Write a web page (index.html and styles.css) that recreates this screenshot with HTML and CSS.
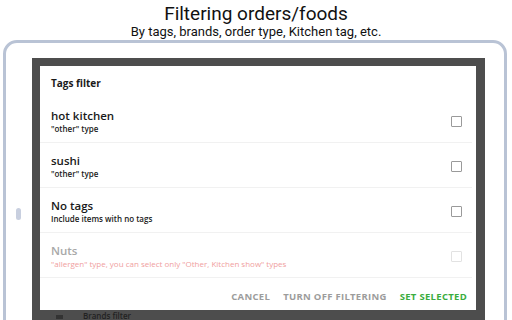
FILE: index.html
```html
<!DOCTYPE html>
<html>
<head>
<meta charset="utf-8">
<link rel="stylesheet" href="styles.css">
</head>
<body>
<div class="page">
  <header class="intro">
    <h1 class="title">Filtering orders/foods</h1>
    <p class="subtitle">By tags, brands, order type, Kitchen tag, etc.</p>
  </header>
  <div class="tablet">
    <div class="bezel"><span class="home"></span></div>
    <div class="screen">
      <div class="dialog">
        <div class="dialog-head">Tags filter</div>
        <div class="row">
          <div class="row-text">
            <div class="row-title">hot kitchen</div>
            <div class="row-sub">"other" type</div>
          </div>
          <span class="check"></span>
        </div>
        <div class="row">
          <div class="row-text">
            <div class="row-title">sushi</div>
            <div class="row-sub">"other" type</div>
          </div>
          <span class="check"></span>
        </div>
        <div class="row">
          <div class="row-text">
            <div class="row-title">No tags</div>
            <div class="row-sub">Include items with no tags</div>
          </div>
          <span class="check"></span>
        </div>
        <div class="row row-disabled">
          <div class="row-text">
            <div class="row-title">Nuts</div>
            <div class="row-sub">"allergen" type, you can select only "Other, Kitchen show" types</div>
          </div>
          <span class="check"></span>
        </div>
        <div class="actions">
          <span class="btn">CANCEL</span>
          <span class="btn">TURN OFF FILTERING</span>
          <span class="btn btn-primary">SET SELECTED</span>
        </div>
      </div>
      <div class="under">
        <span class="under-icon"></span>
        <span class="under-text">Brands filter</span>
      </div>
    </div>
  </div>
</div>
</body>
</html>
```
FILE: styles.css
```css
html, body {
  margin: 0;
  padding: 0;
  background: #ffffff;
}
.page {
  width: 512px;
  height: 320px;
  overflow: hidden;
  font-family: "Open Sans", "Liberation Sans", sans-serif;
}
.intro {
  height: 40px;
  text-align: center;
  font-family: Roboto, "Liberation Sans", sans-serif;
  color: #111;
}
.title {
  margin: 0;
  padding-top: 3px;
  font-size: 19px;
  font-weight: 400;
  line-height: 21px;
}
.subtitle {
  margin: 0;
  font-size: 13px;
  line-height: 15px;
}
.tablet {
  margin-left: 3px;
  width: 498px;
  height: 320px;
  border: 3px solid #b9c3d5;
  border-radius: 14px;
  padding-top: 15px;
  display: flex;
  align-items: flex-start;
}
.bezel {
  width: 26px;
  flex: none;
}
.home {
  display: block;
  margin-left: 10px;
  margin-top: 150px;
  width: 5px;
  height: 12px;
  border-radius: 3px;
  background: #c8cfdf;
}
.screen {
  width: 437px;
  height: 300px;
  background: #4d4d4d;
  padding: 8px 8px 0 8px;
}
.dialog {
  width: 436px;
  height: 244px;
  background: #ffffff;
  display: flex;
  flex-direction: column;
}
.dialog-head {
  height: 32px;
  box-sizing: border-box;
  padding: 10px 0 0 11px;
  font-size: 10px;
  font-weight: 700;
  color: #1a1a1a;
  line-height: 14px;
}
.row {
  height: 45px;
  box-sizing: border-box;
  border-bottom: 1px solid #f1f1f1;
  margin-right: 4px;
  padding: 2px 10px 0 11px;
  display: flex;
  align-items: center;
  justify-content: space-between;
}
.row-title {
  font-size: 11.5px;
  line-height: 15px;
  color: #1a1a1a;
  font-weight: 600;
}
.row-sub {
  font-size: 8px;
  line-height: 11px;
  font-weight: 600;
  color: #1a1a1a;
}
.check {
  width: 9px;
  height: 9px;
  border: 1.5px solid #9a9a9a;
  border-radius: 1px;
}
.row-disabled .row-title {
  color: #a8a8a8;
}
.row-disabled .row-sub {
  color: #f0a0a0;
  font-weight: 500;
}
.row-disabled .check {
  border-color: #e2e2e2;
}
.actions {
  flex: 1;
  display: flex;
  justify-content: flex-end;
  align-items: center;
  gap: 13px;
  padding: 4px 9px 0 0;
}
.btn {
  font-size: 9.5px;
  font-weight: 700;
  color: #9c9c9c;
  letter-spacing: 0.3px;
}
.btn-primary {
  color: #3aad3e;
}
.under {
  display: flex;
  align-items: flex-start;
  height: 20px;
  padding-left: 16px;
  gap: 20px;
}
.under-icon {
  width: 7px;
  height: 4px;
  background: #333;
  margin-top: 5px;
}
.under-text {
  font-size: 8px;
  line-height: 10px;
  font-weight: 600;
  color: #222;
  margin-top: 1px;
}
```
